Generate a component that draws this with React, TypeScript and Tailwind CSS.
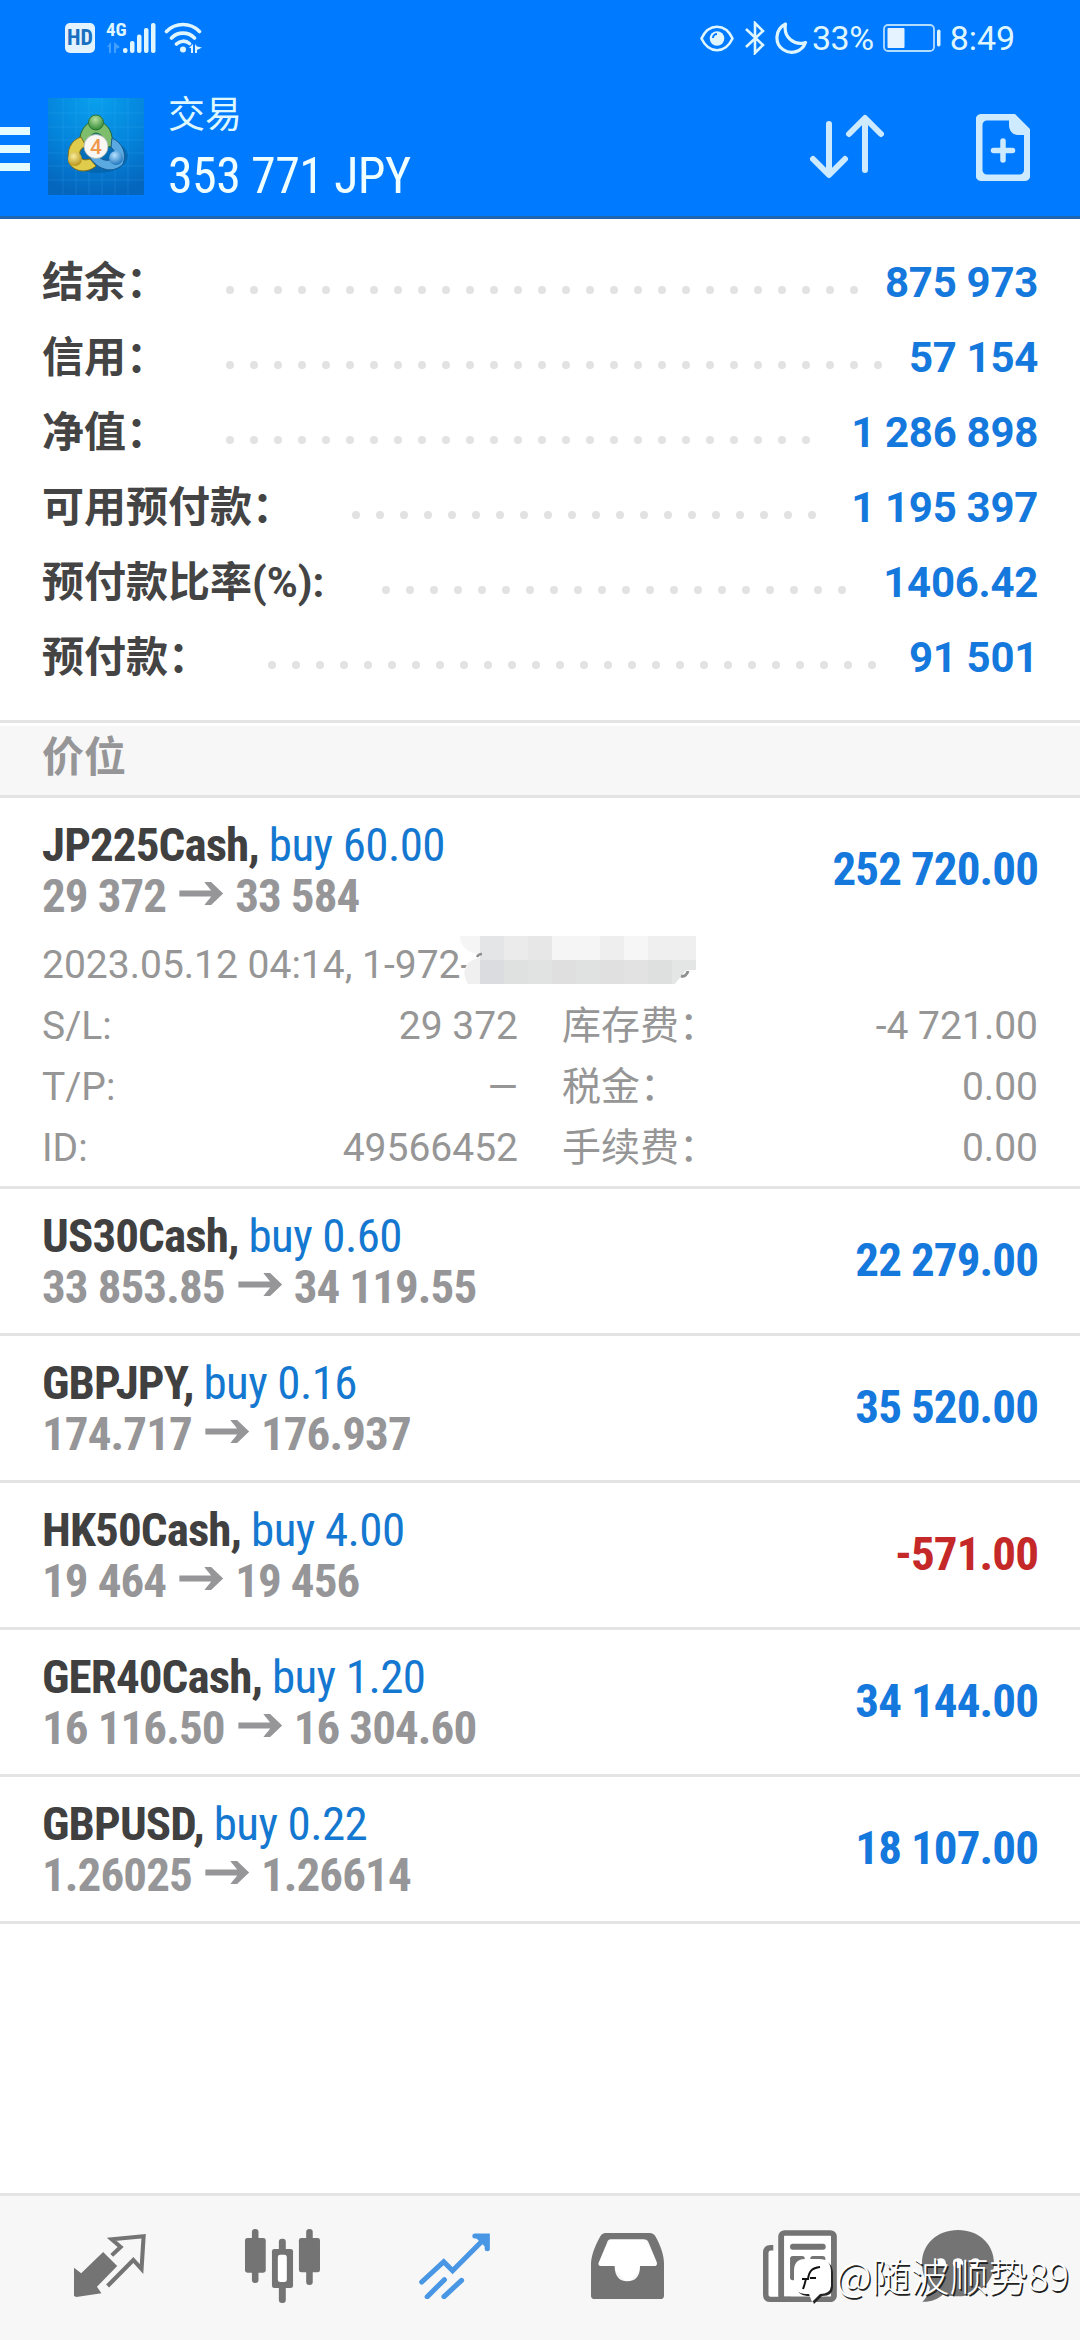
type SummaryRow = { label: string; value: string; dots: number };
type Position = { symbol: string; side: string; from: string; to: string; profit: string; loss?: boolean; open?: boolean };

const summary: SummaryRow[] = [
  { label: '结余：', value: '875 973', dots: 27 },
  { label: '信用：', value: '57 154', dots: 28 },
  { label: '净值：', value: '1 286 898', dots: 25 },
  { label: '可用预付款：', value: '1 195 397', dots: 20 },
  { label: '预付款比率(%):', value: '1406.42', dots: 20 },
  { label: '预付款：', value: '91 501', dots: 26 },
];

const positions: Position[] = [
  { symbol: 'JP225Cash', side: 'buy 60.00', from: '29 372', to: '33 584', profit: '252 720.00', open: true },
  { symbol: 'US30Cash', side: 'buy 0.60', from: '33 853.85', to: '34 119.55', profit: '22 279.00' },
  { symbol: 'GBPJPY', side: 'buy 0.16', from: '174.717', to: '176.937', profit: '35 520.00' },
  { symbol: 'HK50Cash', side: 'buy 4.00', from: '19 464', to: '19 456', profit: '-571.00', loss: true },
  { symbol: 'GER40Cash', side: 'buy 1.20', from: '16 116.50', to: '16 304.60', profit: '34 144.00' },
  { symbol: 'GBPUSD', side: 'buy 0.22', from: '1.26025', to: '1.26614', profit: '18 107.00' },
];

const details = [
  { label: 'S/L:', value: '29 372' },
  { label: '库存费：', value: '-4 721.00' },
  { label: 'T/P:', value: '—' },
  { label: '税金：', value: '0.00' },
  { label: 'ID:', value: '49566452' },
  { label: '手续费：', value: '0.00' },
];

function StatusBar() {
  return (
    <div className="flex h-[76px] items-center justify-between pl-[65px] pr-[65px] text-[#dff6ff]">
      <div className="flex items-center">
        <span className="flex h-[30px] w-[30px] items-center justify-center rounded-[5px] bg-[#e2f3ff] text-[22px] font-bold leading-none text-[#1a6fc0] [font-stretch:85%]">HD</span>
        <div className="ml-[11px] flex h-[32px] w-[50px]">
          <div className="w-[17px]">
            <p className="text-[19px] font-bold leading-[16px] [font-stretch:75%]">4G</p>
            <svg width="14" height="12" viewBox="0 0 14 12" className="mt-[3px]" fill="currentColor" opacity=".3">
              <path d="M1 6l4-5v11H3V6zM8 1v11h2V8l4-2z" />
            </svg>
          </div>
          <svg width="33" height="32" viewBox="17 0 33 32" fill="currentColor">
            <rect x="17" y="26" width="4.5" height="5" rx="2" />
            <rect x="24" y="19" width="4.5" height="12" rx="2" />
            <rect x="31" y="12.5" width="4.5" height="18.5" rx="2" />
            <rect x="38" y="6" width="4.5" height="25" rx="2" />
            <rect x="45" y="1" width="4.5" height="30" rx="2" />
          </svg>
        </div>
        <svg className="ml-[8px]" width="39" height="32" viewBox="0 0 39 32" fill="none" stroke="currentColor" strokeWidth="3.6" strokeLinecap="round">
          <path d="M2.5 9.5a23 23 0 0 1 33 0M7.5 16a16 16 0 0 1 23 0M12.5 22a9.500 9.500 0 0 1 13-.5" />
          <circle cx="19" cy="27.500" r="3" fill="currentColor" stroke="none" />
          <path d="M25 26l4-4v9h-2v-5zM31 22v9h2v-3l5-2.500-5-1z" fill="currentColor" stroke="none" />
        </svg>
      </div>
      <div className="flex items-center">
        <svg width="34" height="27" viewBox="0 0 34 27" fill="none" stroke="currentColor" strokeWidth="2.600">
          <path d="M1.500 13.500C5 6 10.500 1.800 17 1.800S29 6 32.500 13.500C29 21 23.500 25.200 17 25.200S5 21 1.500 13.500z" />
          <circle cx="17" cy="13.500" r="7.300" fill="currentColor" stroke="none" />
          <path d="M13 13a4 4 0 0 1 4-4" stroke="#007aff" strokeWidth="2" />
        </svg>
        <svg className="ml-[10px]" width="22" height="34" viewBox="0 0 22 34" fill="none" stroke="currentColor" strokeWidth="2.600">
          <path d="M2 8l17 16-8 8V2l8 8L2 26" />
        </svg>
        <svg className="ml-[9px]" width="33" height="32" viewBox="0 0 33 32" fill="none" stroke="currentColor" strokeWidth="3.200" strokeLinejoin="round">
          <path d="M10.500 2C-1 8 0 22 8 27.500c8 5.500 19 2.500 22.500-7C20 24 8 16 10.500 2z" />
        </svg>
        <span className="ml-[4px] text-[34px] leading-none tracking-[-0.4px]">33%</span>
        <svg className="ml-[9px]" width="59" height="28" viewBox="0 0 59 28">
          <rect x="1" y="1" width="50" height="26" rx="4" fill="none" stroke="currentColor" strokeWidth="1.800" opacity=".8" />
          <rect x="4.500" y="4" width="17" height="20" rx="1" fill="#e4f3ff" />
          <rect x="54" y="5.500" width="3.500" height="17" rx="1.700" fill="currentColor" />
        </svg>
        <span className="ml-[8px] text-[34px] leading-none tracking-[-0.1px]">8:49</span>
      </div>
    </div>
  );
}

function AppLogo() {
  return (
    <svg width="96" height="97" viewBox="0 0 96 97">
      <defs>
        <radialGradient id="sky" cx=".5" cy="0" r="1">
          <stop offset="0" stopColor="#0aa0ee" />
          <stop offset=".55" stopColor="#0484dc" />
          <stop offset="1" stopColor="#0566bd" />
        </radialGradient>
        <radialGradient id="green" cx=".45" cy=".3" r=".7"><stop offset="0" stopColor="#b6dfa0" /><stop offset="1" stopColor="#2f8a35" /></radialGradient>
        <radialGradient id="gold" cx=".4" cy=".3" r=".7"><stop offset="0" stopColor="#f8ec9a" /><stop offset="1" stopColor="#b8951a" /></radialGradient>
        <radialGradient id="blue" cx=".4" cy=".3" r=".7"><stop offset="0" stopColor="#b4e2ff" /><stop offset="1" stopColor="#2277bf" /></radialGradient>
      </defs>
      <rect width="96" height="97" fill="url(#sky)" />
      <path d="M15 0v97M28 0v97M41 0v97M54 0v97M67 0v97M80 0v97M0 15h96M0 29h96M0 42h96M0 55h96M0 68h96M0 82h96" stroke="#4cc0ff" strokeWidth=".7" opacity=".25" />
      <ellipse cx="50" cy="58" rx="30" ry="17" fill="#034d84" opacity=".4" />
      <path d="M32 50C30 36 35 25 48 22c13 3 18 14 16 27l-8-1c1-8-2-12-8-13-6 1-8 6-7 13z" fill="#7dbd6c" stroke="#24682d" />
      <path d="M33 39C23 42 18 52 21 65c6 10 19 10 27 3l-6-7c-6 2-10 0-10-4-1-4 1-7 6-9z" fill="#e0cc4c" stroke="#826c16" />
      <path d="M64 40c11 5 15 16 11 26-8 9-23 8-33-6l6-4c5 6 11 8 17 5 3-5 2-8-2-12z" fill="#5aa9e0" stroke="#185b91" />
      <circle cx="48" cy="24.500" r="7.500" fill="url(#green)" stroke="#2b7434" />
      <circle cx="27" cy="61" r="7" fill="url(#gold)" />
      <circle cx="68" cy="60" r="7" fill="url(#blue)" />
      <circle cx="48" cy="48.500" r="12" fill="#f8f7f4" stroke="#a7b1b0" strokeWidth=".8" />
      <text x="48" y="56" textAnchor="middle" fontSize="21" fontWeight="500" fill="#ef974a">4</text>
    </svg>
  );
}

function Header() {
  return (
    <header className="border-b-[3px] border-[#1f66b0] bg-[#007aff]">
      <StatusBar />
      <div className="flex h-[140px] items-center pr-[50px]">
        <div className="mt-[6px] flex w-[30px] flex-col gap-[10px]">
          <span className="h-[8px] bg-[#e4fbff]" />
          <span className="h-[8px] bg-[#e4fbff]" />
          <span className="h-[8px] bg-[#e4fbff]" />
        </div>
        <div className="ml-[18px]">
          <AppLogo />
        </div>
        <div className="ml-[24px] flex-1">
          <p className="text-[37px] leading-[60px] text-[#dff8ff]">交易</p>
          <p className="text-[50px] leading-[60px] tracking-[-0.6px] text-[#f0ffff] [font-stretch:75%]">353 771 JPY</p>
        </div>
        <svg className="mr-[92px]" width="74" height="65" viewBox="0 0 74 65" fill="none" stroke="#cdeaff" strokeWidth="6" strokeLinecap="round" strokeLinejoin="round">
          <path d="M19 10v50M3 45l16 16 16-16M55 56V5M39 20L55 4l16 16" />
        </svg>
        <svg className="mt-[2px]" width="54" height="67" viewBox="0 0 54 67">
          <path fillRule="evenodd" fill="#cdeaff" d="M5 0h34l15 15v46a5 5 0 0 1-5 6H5a5 5 0 0 1-5-6V6a5 5 0 0 1 5-6zm6 6.500a4.500 4.500 0 0 0-4.500 4.500v45a4.500 4.500 0 0 0 4.500 4.500h32.500a4.500 4.500 0 0 0 4.500-4.500V21h-6c-5 0-9-4-9-10V6.500z" />
          <path d="M27 27v19M17.500 36.500h19" stroke="#cdeaff" strokeWidth="5.500" strokeLinecap="round" />
        </svg>
      </div>
    </header>
  );
}

function Summary() {
  return (
    <section className="px-[42px] pb-[25px] pt-[26px] text-[42px] font-bold leading-[75px]">
      {summary.map((row) => (
        <div key={row.label} className="flex h-[75px] items-center">
          <span className="whitespace-nowrap text-[#444444]">{row.label}</span>
          <div className="ml-[58px] mt-[15px] flex flex-1 gap-[16px]">
            {Array.from({ length: row.dots }, (_, i) => (
              <span key={i} className="h-[8px] w-[8px] shrink-0 rounded-full bg-[#e2e2e2]" />
            ))}
          </div>
          <span className="whitespace-nowrap tracking-[-0.3px] text-[#1478dc]">{row.value}</span>
        </div>
      ))}
    </section>
  );
}

/* pixelated block covering the rest of the account number */
function Mosaic() {
  const top = ['#e4e5e7', '#ebebeb', '#e7e7e8', '#f5f5f5', '#f5f5f5', '#eeeeee', '#f6f6f6', '#efefef', '#efefef'];
  const bottom = ['#dadcdf', '#dfe0e0', '#e1e2e2', '#dfdfe0', '#e0e1e1', '#e0e0e1', '#e2e2e2', '#dedfdf', '#e4e5e5'];
  return (
    <svg className="absolute left-[418px] top-[-9px]" width="250" height="66" viewBox="460 926 250 66">
      <path d="M460 936h20v18c-12 0-20-8-20-18z" fill="#f5f5f6" />
      <path d="M480 958c-16 2-19 15-12 26h12z" fill="#f0f0f0" />
      {top.map((color, i) => <rect key={i} x={480 + i * 24} y="936" width="24" height="24" fill={color} />)}
      {bottom.map((color, i) => <rect key={i} x={480 + i * 24} y="960" width="24" height="24" fill={color} />)}
      <path d="M697 970h-11l-12 15h23z" fill="#fff" />
      <path d="M681 976c3 1 6-1 7-5" fill="none" stroke="#8f8f8f" strokeWidth="3" />
      <path d="M477 957c1-2 3-3 5-3" fill="none" stroke="#8f8f8f" strokeWidth="2.500" />
    </svg>
  );
}

function PositionItem({ item }: { item: Position }) {
  return (
    <li className="border-b-[3px] border-[#e4e4e4] px-[42px]">
      <div className="flex h-[144px] items-center justify-between text-[47px] font-bold leading-[51px] tracking-[-0.9px] [font-stretch:75%]">
        <div className="-mt-px">
          <p className="whitespace-nowrap text-[#404040]">
            {item.symbol}, <span className="font-normal tracking-[-0.6px] text-[#1478d0]">{item.side}</span>
          </p>
          <p className="flex items-center whitespace-nowrap text-[#969698]">
            {item.from}
            <svg className="ml-[13px] mr-[11px] mt-[-3px]" width="45" height="25" viewBox="0 0 46 26" fill="currentColor">
              <path d="M0 10h33c-2-3-5-6-7-9h7l12.500 12L33 25h-7c2-3 5-6 7-9H0z" />
            </svg>
            {item.to}
          </p>
        </div>
        <span className={item.loss ? 'mb-[3px] text-[#c42828]' : 'mb-[3px] text-[#1478dc]'}>{item.profit}</span>
      </div>
      {item.open && (
        <div className="-mt-[7px] pb-[7px] text-[39px] leading-[61px] text-[#969696]">
          <p className="relative h-[61px] whitespace-nowrap">
            2023.05.12 04:14, 1-972-
            <Mosaic />
          </p>
          <div className="grid grid-cols-2 gap-x-[44px]">
            {details.map((d) => (
              <div key={d.label} className="flex h-[61px] justify-between">
                <span>{d.label}</span>
                <span>{d.value}</span>
              </div>
            ))}
          </div>
        </div>
      )}
    </li>
  );
}

function TabBar() {
  return (
    <nav className="flex h-[147px] items-center gap-[99px] border-t-[3px] border-[#e4e4e4] bg-[#f7f7f7] pb-[5px] pl-[74px] text-[#747474]">
      <svg width="72" height="63" viewBox="215 164 210 189" preserveAspectRatio="none" className="shrink-0">
        <path d="M215 265l21 17 64-64 41 42-59 62 13 20-73 11-7-3z" fill="currentColor" />
        <path d="M325 228l26-25-26-23 93-9-6 98-24-27-75 78" fill="none" stroke="currentColor" strokeWidth="12" />
      </svg>
      <svg width="75" height="74" viewBox="709 147 217 222" preserveAspectRatio="none" className="shrink-0" fill="currentColor">
        <rect x="709" y="174" width="60" height="104" rx="7" />
        <rect x="729" y="147" width="19" height="162" rx="9" />
        <rect x="865" y="174" width="61" height="103" rx="7" />
        <rect x="886" y="147" width="19" height="168" rx="9" />
        <rect x="787" y="207" width="61" height="117" rx="7" />
        <rect x="807" y="176" width="20" height="193" rx="9" />
        <rect x="804" y="224" width="26" height="82" rx="7" fill="#fff" />
      </svg>
      <svg width="71" height="66" viewBox="1213 155 207 198" preserveAspectRatio="none" className="shrink-0" fill="none" stroke="#4896e4" strokeWidth="15" strokeLinecap="round">
        <path d="M1221 302l64-61 26 27 100-103M1376 164h36v38M1237 346l50-51M1286 346l51-49" />
        <path d="M1392 172h18v18z" />
      </svg>
      <svg width="73" height="66" viewBox="146 155 210 198" preserveAspectRatio="none" className="ml-[2px] shrink-0">
        <path d="M203 170h95l45 80-50 10-40 46-45-46-46-8z" fill="#fff" />
        <path fillRule="evenodd" fill="currentColor" d="M188 155h127q11 0 17 11c13 24 24 54 24 79v98q0 10-11 10H157q-11 0-11-10v-98c2-30 14-55 26-79q6-11 16-11zm15 19q-8 0-11 10l-24 60q-3 10 6 10h40q1 46 36 46 37 0 37-46h41q10 0 7-12l-23-58q-4-10-15-10z" />
      </svg>
      <svg width="74" height="72" viewBox="647 147 216 215" preserveAspectRatio="none" className="shrink-0">
        <rect x="663" y="208" width="28" height="140" fill="#fff" />
        <rect x="700" y="156" width="154" height="198" rx="10" fill="#fff" stroke="currentColor" strokeWidth="17" />
        <path d="M677 200h-8q-14 0-14 16v124q0 14 14 14h60" fill="none" stroke="currentColor" strokeWidth="16" />
        <rect x="726" y="188" width="104" height="18" rx="8" fill="currentColor" />
        <rect x="726" y="225" width="43" height="72" rx="8" fill="currentColor" />
        <rect x="785" y="225" width="44" height="17" rx="8" fill="currentColor" />
        <rect x="785" y="279" width="44" height="17" rx="8" fill="currentColor" />
      </svg>
      <svg width="72" height="72" viewBox="1109 147 208 215" preserveAspectRatio="none" className="-ml-[14px] shrink-0">
        <path d="M1213 147c60 0 104 42 104 99s-44 99-104 99c-15 0-30-3-42-8-15 17-38 25-61 24 10-10 20-25 22-44-15-20-23-44-23-71 0-57 44-99 104-99z" fill="currentColor" />
        <circle cx="1163" cy="246" r="15" fill="#fff" />
        <circle cx="1213" cy="246" r="15" fill="#fff" />
        <circle cx="1263" cy="246" r="15" fill="#fff" />
      </svg>
    </nav>
  );
}

function Watermark() {
  return (
    <div className="absolute left-[794px] top-[2249px] flex items-start text-white">
      <svg width="40" height="50" viewBox="0 0 40 50" className="mt-[9px]">
        <path d="M13 3h14q12 0 12 13v13q0 9-11 9l-8 8-3-8h-4Q2 37 2 26V15Q2 3 13 3z" fill="#222" />
        <path d="M11 1h14q12 0 12 13v13q0 9-11 9l-8 8-3-8h-4Q0 35 0 24V13Q0 1 11 1z" fill="#fff" />
        <path d="M9 31c2-5 2-7 3-10H8h6c1-8 4-11 12-12M16 20h6" fill="none" stroke="#111" strokeWidth="2" />
      </svg>
      <span className="ml-[2px] whitespace-nowrap font-['Noto_Sans_CJK_SC',sans-serif] text-[39px] font-light leading-[50px] [text-shadow:1.5px_1.5px_0_#222]">@随波顺势89</span>
    </div>
  );
}

export default function App() {
  return (
    <div className="relative flex h-[2340px] w-[1080px] flex-col overflow-hidden bg-white font-[Roboto,'Noto_Sans_CJK_SC',sans-serif]">
      <Header />
      <Summary />
      <h2 className="border-y-[3px] border-[#e4e4e4] bg-white pt-[3px]">
        <span className="block h-[69px] bg-[#f7f7f7] pl-[42px] text-[42px] font-bold leading-[63px] text-[#969698]">价位</span>
      </h2>
      <ul className="flex-1">
        {positions.map((item) => <PositionItem key={item.symbol} item={item} />)}
      </ul>
      <TabBar />
      <Watermark />
    </div>
  );
}
